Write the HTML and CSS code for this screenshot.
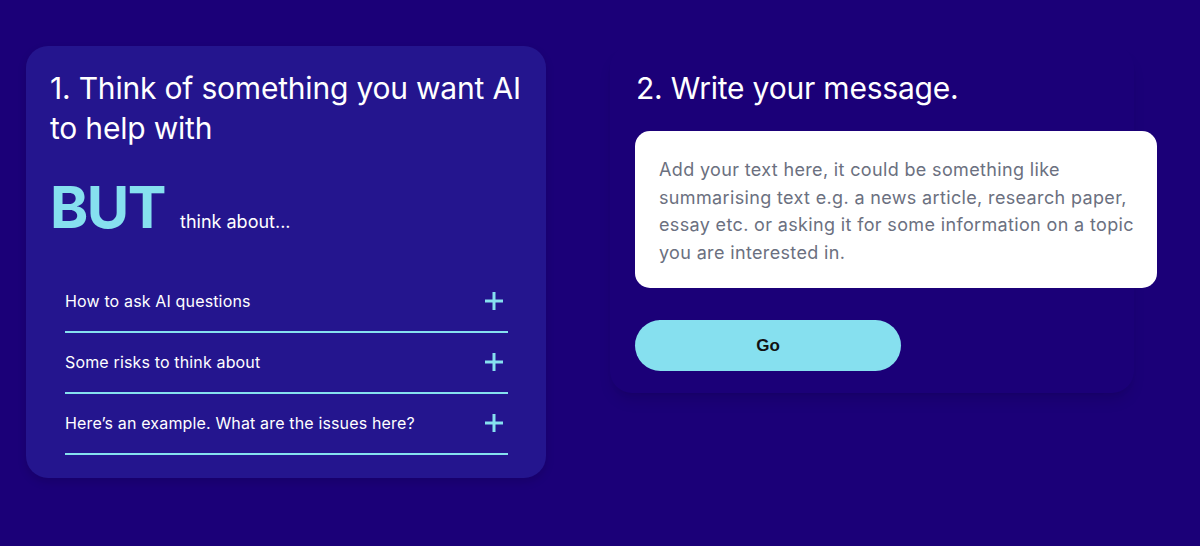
FILE: index.html
```html
<!DOCTYPE html>
<html lang="en">
<head>
<meta charset="utf-8">
<title>Ask AI</title>
<link rel="stylesheet" href="styles.css">
</head>
<body>
<main class="page">
  <section class="card">
    <h2 class="step-title">1. Think of something you want AI to help with</h2>
    <div class="but-row">
      <span class="but">BUT</span>
      <span class="but-sub">think about...</span>
    </div>
    <ul class="accordion">
      <li class="acc-item">
        <span class="acc-label">How to ask AI questions</span>
        <svg class="plus" viewBox="0 0 20 20" width="20" height="20"><path d="M10 1v18M1 10h18" stroke="currentColor" stroke-width="3"/></svg>
      </li>
      <li class="acc-item">
        <span class="acc-label">Some risks to think about</span>
        <svg class="plus" viewBox="0 0 20 20" width="20" height="20"><path d="M10 1v18M1 10h18" stroke="currentColor" stroke-width="3"/></svg>
      </li>
      <li class="acc-item">
        <span class="acc-label">Here’s an example. What are the issues here?</span>
        <svg class="plus" viewBox="0 0 20 20" width="20" height="20"><path d="M10 1v18M1 10h18" stroke="currentColor" stroke-width="3"/></svg>
      </li>
    </ul>
  </section>
  <section class="panel">
    <h2 class="step-title">2. Write your message.</h2>
    <textarea class="message" placeholder="Add your text here, it could be something like summarising text e.g. a news article, research paper, essay etc. or asking it for some information on a topic you are interested in."></textarea>
    <button class="go" type="button">Go</button>
  </section>
</main>
</body>
</html>
```

FILE: styles.css
```css
html, body {
  margin: 0;
  padding: 0;
  background: #1b0078;
}
body {
  font-family: Inter, "Open Sans", sans-serif;
  color: #ffffff;
  height: 546px;
  overflow: hidden;
}
.page {
  display: flex;
  align-items: flex-start;
  gap: 64px;
  padding: 46px 0 0 26px;
}
.card {
  width: 520px;
  box-sizing: border-box;
  background: #24158e;
  border-radius: 22px;
  padding: 22px 24px 23px 24px;
  box-shadow: 0 4px 10px rgba(0, 0, 0, 0.12);
}
.step-title {
  margin: 0;
  font-size: 30px;
  line-height: 40px;
  font-weight: 400;
  letter-spacing: -0.2px;
}
.but-row {
  display: flex;
  align-items: baseline;
  gap: 15px;
  margin-top: 29px;
}
.but {
  font-size: 58px;
  line-height: 60px;
  font-weight: 700;
  color: #86e0ef;
  letter-spacing: -1.5px;
}
.but-sub {
  font-size: 18px;
}
.accordion {
  list-style: none;
  margin: 35px 14px 0 15px;
  padding: 0;
}
.acc-item {
  display: flex;
  align-items: center;
  justify-content: space-between;
  padding: 18px 4px 19px 0;
  border-bottom: 2px solid #86e0ef;
}
.acc-label {
  font-size: 16px;
  line-height: 22px;
  letter-spacing: 0.15px;
}
.plus {
  color: #86e0ef;
  display: block;
}
.panel {
  width: 524px;
  box-sizing: border-box;
  padding: 22px 0 22px 25px;
  border-radius: 22px;
  box-shadow: 0 10px 15px -3px rgba(0, 0, 0, 0.1), 0 4px 6px -4px rgba(0, 0, 0, 0.1);
}
.panel .step-title {
  padding-left: 1px;
}
.message {
  display: block;
  width: 522px;
  height: 157px;
  box-sizing: border-box;
  margin-top: 23px;
  padding: 25px 14px 20px 24px;
  border: none;
  border-radius: 15px;
  background: #ffffff;
  resize: none;
  outline: none;
  font-family: Inter, "Open Sans", sans-serif;
  font-size: 18px;
  line-height: 27.5px;
  letter-spacing: 0.35px;
  color: #374151;
}
.message::placeholder {
  color: #6b7080;
  opacity: 1;
}
.go {
  display: block;
  margin-top: 32px;
  width: 266px;
  height: 51px;
  border: none;
  border-radius: 26px;
  background: #86e0ef;
  color: #111111;
  font-family: "Liberation Sans", Arial, sans-serif;
  font-weight: 700;
  font-size: 17px;
  cursor: pointer;
}
```
